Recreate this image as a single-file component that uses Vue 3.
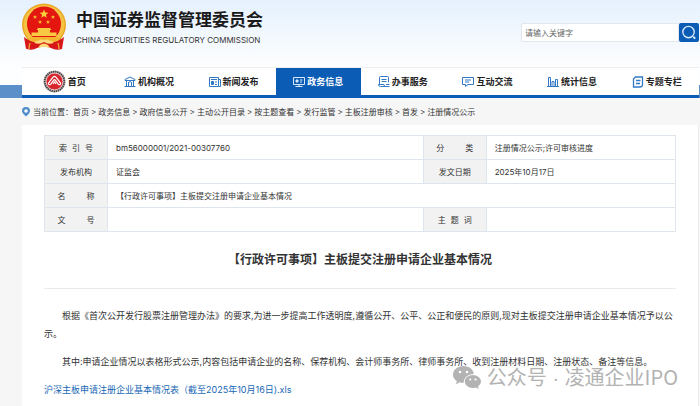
<script setup>
import { ref } from 'vue'

const keyword = ref('')

const navItems = [
  { label: '首页', icon: 'home' },
  { label: '机构概况', icon: 'org' },
  { label: '新闻发布', icon: 'news' },
  { label: '政务信息', icon: 'gov', active: true },
  { label: '办事服务', icon: 'service' },
  { label: '互动交流', icon: 'chat' },
  { label: '统计信息', icon: 'stats' },
  { label: '专题专栏', icon: 'topic' },
]

const crumbs = ['首页', '政务信息', '政府信息公开', '主动公开目录', '按主题查看', '发行监管', '主板注册审核', '首发', '注册情况公示']
</script>

<template>
  <div class="page">
    <header class="header">
      <a class="brand" href="#">
        <svg class="emblem" viewBox="0 0 44 48" aria-hidden="true">
          <path d="M6 33 L38 33 L40 46 Q34 48 29 45 L22 43 L15 45 Q10 48 5 46 Z" fill="#d8161b" />
          <ellipse cx="22" cy="22" rx="22" ry="21.5" fill="#e9a825" />
          <ellipse cx="22" cy="22" rx="20.5" ry="20" fill="#f5c344" />
          <ellipse cx="22" cy="21" rx="17" ry="17.5" fill="#e3170f" />
          <path d="M22 6.500 l1.200 3 3.200.2 -2.500 2 .9 3.100 -2.800-1.800 -2.800 1.800 .9-3.100 -2.500-2 3.200-.2z" fill="#fbd23c" />
          <g fill="#f6bd35">
            <path id="star" d="M13 12 l.6 1.300 1.400.1 -1.100 1 .4 1.400 -1.300-.8 -1.300.8 .4-1.400 -1.100-1 1.400-.1z" />
            <use href="#star" x="18" />
            <use href="#star" x="5" y="5" />
            <use href="#star" x="13" y="5" />
          </g>
          <path d="M16 25 h12 l1.500 2 h-1.500 v2.500 h6.500 v3.500 h-25 v-3.500 H16 v-2.500 h-1.500z" fill="#f8c943" />
          <path d="M7 34 H37 L33 39 L28 37 H16 L11 39z" fill="#f3b52f" />
          <path d="M2 34 Q12 42 19 38 Q22 37 25 38 Q32 42 42 34 L40 46 Q33 43 27 43 Q22 41 17 43 Q11 43 4 46z" fill="#d71618" />
          <path d="M12 40 Q17 35 22 37 Q27 35 32 40 Q26 42 22 39 Q18 42 12 40z M18 42 Q22 39 26 42 L28 45 Q22 43 16 45z" fill="#fadb7a" />
          <path d="M8 40 Q7 43 7 46 M36 40 Q37 43 37 46" fill="none" stroke="#efad3b" stroke-width="1.200" />
        </svg>
        <span class="brand-text">
          <strong class="brand-name">中国证券监督管理委员会</strong>
          <span class="brand-en">CHINA SECURITIES REGULATORY COMMISSION</span>
        </span>
      </a>
      <form class="search" @submit.prevent>
        <input v-model="keyword" type="text" class="search-input" placeholder="请输入关键字" aria-label="请输入关键字" />
        <button type="submit" class="search-button" aria-label="搜索">
          <svg viewBox="0 0 20 20" fill="none" stroke="#dcecff">
            <circle cx="9.500" cy="9.500" r="6" stroke-width="1.400" />
            <path d="M14.500 14.500 L16.500 16.500" stroke-width="2" />
          </svg>
        </button>
      </form>
    </header>

    <div class="nav-band">
      <nav class="nav">
        <a v-for="item in navItems" :key="item.label" href="#" class="nav-item" :class="{ active: item.active }">
          <svg v-if="item.icon === 'home'" class="seal" viewBox="0 0 24 24">
            <circle cx="12" cy="12" r="11.500" fill="#c9c4c4" />
            <circle cx="12" cy="12" r="10.200" fill="none" stroke="#4b4141" stroke-width="2" stroke-dasharray="1.500 .7" />
            <circle cx="12" cy="12" r="8.700" fill="#d9242b" stroke="#f6e8e8" stroke-width=".6" />
            <path d="M5.500 14 L10.500 7.500 Q12 5.800 13.500 7.500 L18.500 14 M8 15 L11.200 10.500 Q12 9.500 12.800 10.500 L16 15 M5.500 14 Q6 16 8 15 M18.500 14 Q18 16 16 15 M10.500 14.500 L12 12.500 L13.500 14.500" fill="none" stroke="#fff" stroke-width="1.300" />
          </svg>
          <svg v-else class="nav-icon" viewBox="0 0 12 12" fill="none" stroke="currentColor" stroke-width="1">
            <g v-if="item.icon === 'org'">
              <path d="M1 4.500 V3.500 L6 1 L11 3.500 V4.500 Z M2.500 5 V10 M4.500 6 V10 M7.500 6 V10 M9.500 5 V10 M.5 10.500 H11.500 M4.500 6.500 Q6 4.500 7.500 6.500" />
            </g>
            <g v-else-if="item.icon === 'news'">
              <path d="M.5 1.500 H9.500 V10.500 H.5 Z M9.500 3.500 H11.500 V10.500 H9.500 M2 3.500 H8 M6 6 H8 M6 8.500 H8" />
              <path d="M2.500 5.500 H4.500 V8.500 H2.500z" fill="currentColor" />
            </g>
            <g v-else-if="item.icon === 'gov'">
              <path d="M.5 1.500 H11.500 V8.500 H.5 Z M2.500 10.500 H9.500 M6 8.500 V10.500 M7 4 H9.500 M7 6 H9" />
              <path d="M3 4 H5 V6 H3z" fill="currentColor" />
            </g>
            <g v-else-if="item.icon === 'service'">
              <path d="M10.500 6.500 V1.500 Q10.500 .5 9.500 .5 H2.500 Q1.500 .5 1.500 1.500 V8.500 M3.500 3.500 H8.500 M3.500 5.500 H8.500 M.5 8.500 H6 Q6 10.500 7.500 10.500 H11.500 M.5 8.500 Q.5 10.500 2.500 10.500 H7.500 M8 8.500 H11.500" />
            </g>
            <g v-else-if="item.icon === 'chat'">
              <path d="M.5 1.500 H11.500 V8.500 H6 L3.500 10.500 V8.500 H.5 Z M3 4 H9 M3 6 H7" />
            </g>
            <g v-else-if="item.icon === 'stats'">
              <path d="M1.500 10 V1.500 H3.500 V10 M5 10 V5.500 H7 V10 M8.500 10 V3.500 H10.500 V10 M0 10.500 H12" />
            </g>
            <g v-else>
              <path d="M3.500 1 H10.500 V8.500 Q10.500 11 8 11 H1.500 V3 Z M4 4.500 H8.500 M4 7.500 H8" stroke-width="1.300" />
            </g>
          </svg>
          <span>{{ item.label }}</span>
        </a>
      </nav>
    </div>

    <main class="content">
      <nav class="crumbs" aria-label="当前位置">
        <svg class="pin" viewBox="0 0 8 10">
          <path d="M4 0 A4 4 0 0 1 8 4 Q8 6 4 9.500 Q0 6 0 4 A4 4 0 0 1 4 0z" fill="#4d8cc9" />
          <circle cx="4" cy="4" r="1.800" fill="#fff" />
        </svg>
        <span class="crumb-label">当前位置：</span>
        <template v-for="(crumb, i) in crumbs" :key="crumb">
          <span v-if="i" class="sep">&gt;</span>
          <a href="#">{{ crumb }}</a>
        </template>
      </nav>

      <article class="panel">
        <table class="meta">
          <colgroup>
            <col class="col-label" />
            <col class="col-main" />
            <col class="col-label" />
            <col class="col-side" />
          </colgroup>
          <tbody>
            <tr>
              <th scope="row"><span class="spread three"><i>索</i><i>引</i><i>号</i></span></th>
              <td>bm56000001/2021-00307760</td>
              <th scope="row"><span class="spread two"><i>分</i><i>类</i></span></th>
              <td>注册情况公示;许可审核进度</td>
            </tr>
            <tr>
              <th scope="row">发布机构</th>
              <td>证监会</td>
              <th scope="row">发文日期</th>
              <td>2025年10月17日</td>
            </tr>
            <tr>
              <th scope="row"><span class="spread two"><i>名</i><i>称</i></span></th>
              <td colspan="3">【行政许可事项】主板提交注册申请企业基本情况</td>
            </tr>
            <tr>
              <th scope="row"><span class="spread two"><i>文</i><i>号</i></span></th>
              <td></td>
              <th scope="row"><span class="spread three"><i>主</i><i>题</i><i>词</i></span></th>
              <td></td>
            </tr>
          </tbody>
        </table>

        <h1 class="title">【行政许可事项】主板提交注册申请企业基本情况</h1>

        <div class="body">
          <p>根据《首次公开发行股票注册管理办法》的要求,为进一步提高工作透明度,遵循公开、公平、公正和便民的原则,现对主板提交注册申请企业基本情况予以公示。</p>
          <p>其中:申请企业情况以表格形式公示,内容包括申请企业的名称、保荐机构、会计师事务所、律师事务所、收到注册材料日期、注册状态、备注等信息。</p>
          <a class="file" href="#">沪深主板申请注册企业基本情况表（截至2025年10月16日).xls</a>
        </div>
        <div class="watermark">
          <svg viewBox="0 0 28 23">
            <path d="M10.500 0 C16 0 20.500 3.600 20.800 8 C15 8 10.500 11.500 10.800 16.800 Q8.500 17 6.500 16.300 L3 18.500 L3.800 15 Q0 12.500 0 8.500 C0 3.600 4.800 0 10.500 0z" fill="#b3b3b3" />
            <path d="M19.800 9 C24.500 9 28 12 28 15.500 Q28 18.500 25 20.500 L25.600 23 L22.800 21.500 Q21.500 22 19.800 22 C15.200 22 11.800 19 11.800 15.500 C11.800 12 15.200 9 19.800 9z" fill="#b3b3b3" />
            <g fill="#fff">
              <circle cx="7" cy="6" r="1.300" />
              <circle cx="14" cy="6" r="1.300" />
              <circle cx="17.200" cy="13.500" r="1.100" />
              <circle cx="22.600" cy="13.500" r="1.100" />
            </g>
          </svg>
          <span>公众号<span class="dot"> · </span>凌通企业IPO</span>
        </div>
      </article>
    </main>
  </div>
</template>

<style>
body {
  margin: 0;
}
</style>

<style scoped>
.page {
  box-sizing: border-box;
  min-height: 100vh;
  display: flex;
  flex-direction: column;
  font-family: Inter, "Noto Sans CJK SC", sans-serif;
  font-size: 8px;
  color: #333;
  background: #f6f6f6;
}
a {
  color: inherit;
  text-decoration: none;
}
.header {
  box-sizing: border-box;
  height: 67px;
  display: flex;
  justify-content: space-between;
  align-items: flex-start;
  padding: 3px 1px 0 22px;
  background: linear-gradient(#e5f1fd, #fdfeff);
}
.brand {
  display: flex;
  gap: 10px;
}
.emblem {
  width: 44px;
  height: 48px;
}
.brand-text {
  display: flex;
  flex-direction: column;
  padding-top: 5px;
}
.brand-name {
  font-size: 17px;
  line-height: 24px;
  font-weight: 700;
  color: #1a1a1a;
}
.brand-en {
  font-family: Inter, sans-serif;
  font-size: 8px;
  line-height: 16px;
  color: #333;
}
.search {
  display: flex;
  align-items: center;
  padding-top: 20px;
}
.search-input {
  box-sizing: border-box;
  width: 158px;
  height: 19px;
  padding: 0 3px;
  border: 1px solid #e3e7ec;
  border-radius: 2px 0 0 2px;
  background: #fff;
  font: inherit;
  color: #333;
}
.search-input::placeholder {
  color: #666;
  opacity: 1;
}
.search-button {
  width: 20px;
  height: 19px;
  padding: 0;
  border: 0;
  border-radius: 2px;
  background: #0b5cb5;
}
.search-button svg {
  display: block;
  width: 20px;
  height: 19px;
}
.nav-band {
  padding: 0 1px 0 22px;
  background: linear-gradient(#fdfeff 18px, #5b8fc9 18px);
}
.nav {
  display: grid;
  grid-template-columns: repeat(8, 1fr);
  background: #fff;
  border-top: 1px solid #eee;
  border-bottom: 3px solid #0b5cb5;
}
.nav-item {
  height: 27px;
  display: flex;
  align-items: center;
  justify-content: center;
  gap: 2px;
  font-size: 9px;
  font-weight: 700;
  color: #222;
  white-space: nowrap;
}
.nav-item.active {
  background: #0b5cb5;
  color: #fff;
}
.nav-icon {
  width: 12px;
  height: 12px;
  color: #3379c6;
}
.active .nav-icon {
  color: #d8e8fb;
}
.seal {
  width: 23px;
  height: 23px;
}
.content {
  flex: 1;
  display: flex;
  flex-direction: column;
  padding: 0 1px 0 22px;
}
.crumbs {
  display: flex;
  align-items: center;
  height: 27px;
  line-height: 12px;
  white-space: nowrap;
}
.pin {
  width: 8px;
  height: 10px;
  margin-right: 3px;
}
.sep {
  padding: 0 2px;
}
.panel {
  position: relative;
  flex: 1;
  padding: 10px 22px 0;
  background: #fff;
  border-right: 1px solid #eee;
}
.meta {
  width: 100%;
  table-layout: fixed;
  border-collapse: collapse;
}
.col-label {
  width: 10%;
}
.col-main {
  width: 50%;
}
.meta th,
.meta td {
  box-sizing: border-box;
  height: 24px;
  padding: 0 8px;
  border: 1px solid #dfe5ec;
  font-weight: 400;
  line-height: 12px;
  text-align: left;
}
.meta th {
  padding: 0;
  background: #f2f2f2;
  text-align: center;
}
.spread {
  display: inline-flex;
}
.spread i {
  font-style: normal;
}
.three {
  gap: 5px;
}
.two {
  gap: 21px;
}
.title {
  margin: 0;
  padding: 18px 0;
  border-bottom: 1px solid #eaeaea;
  font-size: 12px;
  line-height: 20px;
  font-weight: 700;
  text-align: center;
  color: #333;
}
.body {
  padding-top: 18px;
  font-size: 9px;
  line-height: 18px;
}
.body p {
  margin: 0 0 10px;
  text-indent: 2em;
}
.file {
  display: block;
  color: #1768b5;
}
.watermark {
  position: absolute;
  right: 20px;
  top: 240px;
  display: flex;
  align-items: center;
  gap: 6px;
  font-family: "Noto Sans CJK SC", sans-serif;
  font-size: 20px;
  line-height: 24px;
  color: #b3b3b3;
  white-space: nowrap;
}
.watermark .dot {
  font-family: "Liberation Sans", sans-serif;
}
.watermark svg {
  width: 28px;
  height: 23px;
}
</style>
